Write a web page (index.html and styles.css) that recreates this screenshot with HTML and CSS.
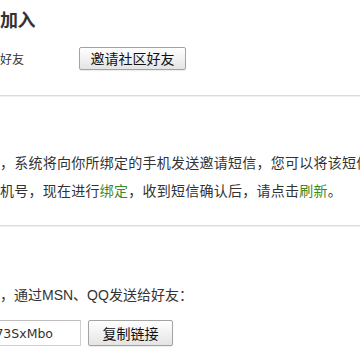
FILE: index.html
```html
<!DOCTYPE html>
<html lang="zh-CN">
<head>
<meta charset="utf-8">
<title>邀请好友</title>
<link rel="stylesheet" href="styles.css">
</head>
<body>
<div class="page">
  <section class="block block-top">
    <h2 class="title">加入</h2>
    <div class="row">
      <span class="label">好友</span>
      <button class="btn btn-invite" type="button">邀请社区好友</button>
    </div>
  </section>
  <section class="block block-sms">
    <p class="line">，系统将向你所绑定的手机发送邀请短信，您可以将该短信</p>
    <p class="line">机号，现在进行<a class="link" href="#">绑定</a>，收到短信确认后，请点击<a class="link" href="#">刷新</a>。</p>
  </section>
  <section class="block block-link">
    <p class="line">，通过MSN、QQ发送给好友：</p>
    <div class="row row-copy">
      <div class="field"><span class="field-text">73SxMbo</span></div>
      <button class="btn btn-copy" type="button">复制链接</button>
    </div>
  </section>
</div>
</body>
</html>
```

FILE: styles.css
```css
html, body {
  margin: 0;
  padding: 0;
  background: #ffffff;
}
body {
  width: 360px;
  height: 360px;
  overflow: hidden;
  font-family: "Liberation Sans", "Noto Sans CJK SC", sans-serif;
  font-size: 14px;
  color: #333333;
}
.page {
  display: flex;
  flex-direction: column;
}
.block-top {
  padding-top: 9px;
  padding-bottom: 25px;
  border-bottom: 1px solid #dcdcdc;
  box-shadow: 0 1px 0 #f2f2f2;
}
.title {
  margin: 0;
  font-size: 18px;
  line-height: 24px;
  font-weight: bold;
  color: #333333;
  letter-spacing: -0.5px;
}
.row {
  display: flex;
  align-items: center;
}
.block-top .row {
  margin-top: 14px;
  align-items: flex-start;
}
.label {
  width: 79px;
  font-size: 12px;
  line-height: 20px;
  padding-top: 3px;
}
.btn {
  font-family: "Noto Sans CJK SC", sans-serif;
  font-size: 14px;
  color: #111111;
  background: linear-gradient(#ffffff, #e4e4e4);
  border: 1px solid #a3a3a3;
  border-radius: 2px;
  box-shadow: 0 1px 1px rgba(0,0,0,0.08);
  margin: 0;
  cursor: pointer;
}
.btn-invite {
  height: 23px;
  line-height: 19px;
  padding: 0 10px;
  width: 107px;
}
.block-sms {
  padding-top: 53px;
  padding-bottom: 20px;
  border-bottom: 1px solid #dcdcdc;
  box-shadow: 0 1px 0 #f2f2f2;
}
.line {
  margin: 0;
  line-height: 28px;
  white-space: nowrap;
  font-size: 14px;
}
.block-sms .line {
  letter-spacing: 0.25px;
}
.link {
  color: #3d8a1e;
  text-decoration: none;
}
.block-link {
  padding-top: 55px;
}
.row-copy {
  margin-top: 11px;
  gap: 7px;
}
.field {
  width: 120px;
  margin-left: -39px;
  height: 26px;
  box-sizing: border-box;
  border: 1px solid #cfcfcf;
  border-top-color: #bdbdbd;
  background: #ffffff;
  display: flex;
  align-items: center;
  justify-content: flex-end;
  padding-right: 27px;
}
.field-text {
  font-family: "DejaVu Sans", sans-serif;
  font-size: 12.5px;
  color: #333333;
}
.btn-copy {
  height: 26px;
  width: 85px;
  line-height: 22px;
  padding: 0 12px;
}
```
